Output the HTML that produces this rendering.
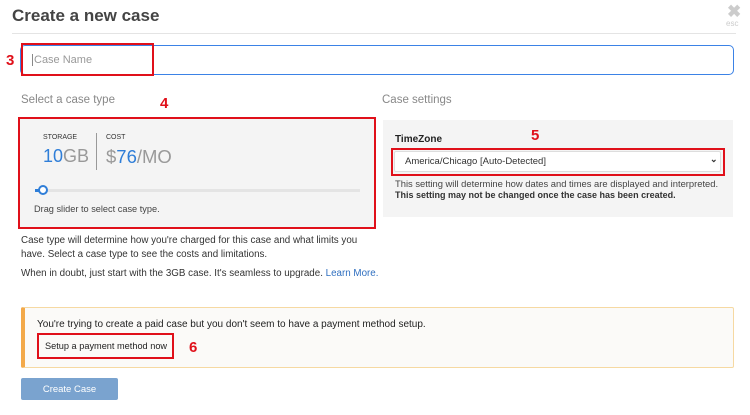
<!DOCTYPE html>
<html><head><style>
*{margin:0;padding:0;box-sizing:border-box}
body{width:750px;height:415px;background:#fff;font-family:"Liberation Sans",sans-serif;position:relative;overflow:hidden;color:#333}
.a{position:absolute;white-space:nowrap}
.red{position:absolute;border:2px solid #e0101a}
.num{position:absolute;color:#e0101a;font-weight:bold;font-size:15px}
</style></head><body>
<div class="a" style="left:12px;top:6px;font-size:17px;font-weight:bold;color:#444">Create a new case</div>
<div class="a" style="left:727px;top:2px;font-size:17px;font-weight:bold;color:#ccc">✖</div>
<div class="a" style="left:726px;top:19px;font-size:8px;color:#ccc">esc</div>
<div class="a" style="left:12px;top:33px;width:724px;height:1px;background:#e4e4e4"></div>

<div class="a" style="left:20px;top:45px;width:714px;height:30px;border:1.5px solid #3b82e6;border-radius:5px"></div>
<div class="red" style="left:21px;top:43px;width:133px;height:33px"></div>
<div class="a" style="left:32px;top:54px;font-size:11px;color:#999;border-left:1px solid #888;padding-left:1px">Case Name</div>
<div class="num" style="left:6px;top:52px">3</div>

<div class="a" style="left:21px;top:94px;font-size:11.5px;color:#888">Select a case type</div>
<div class="num" style="left:160px;top:95px">4</div>
<div class="a" style="left:19px;top:118px;width:356px;height:111px;background:#f4f4f4"></div>
<div class="red" style="left:18px;top:117px;width:358px;height:112px"></div>
<div class="a" style="left:43px;top:134px;font-size:7px;color:#333">STORAGE</div>
<div class="a" style="left:43px;top:146px;font-size:18px;color:#999"><span style="color:#2f7ed8">10</span>GB</div>
<div class="a" style="left:96px;top:133px;width:1px;height:37px;background:#999"></div>
<div class="a" style="left:106px;top:134px;font-size:7px;color:#333">COST</div>
<div class="a" style="left:106px;top:146px;font-size:18.5px;color:#999">$<span style="color:#2f7ed8">76</span>/MO</div>
<div class="a" style="left:35px;top:189px;width:325px;height:3px;background:#e4e4e4"></div>
<div class="a" style="left:35px;top:189px;width:8px;height:3px;background:#2f7ed8"></div>
<div class="a" style="left:38px;top:185px;width:10px;height:10px;border:2px solid #2f7ed8;border-radius:50%;background:#fff"></div>
<div class="a" style="left:34px;top:204px;font-size:9.2px;color:#444">Drag slider to select case type.</div>

<div class="a" style="left:382px;top:94px;font-size:11.5px;color:#888">Case settings</div>
<div class="a" style="left:383px;top:120px;width:350px;height:97px;background:#f4f4f4"></div>
<div class="a" style="left:395px;top:134px;font-size:10px;font-weight:bold;color:#222">TimeZone</div>
<div class="num" style="left:531px;top:127px">5</div>
<div class="a" style="left:394px;top:151px;width:327px;height:21px;background:#fff;border:1px solid #ddd;border-radius:2px"></div>
<div class="red" style="left:391px;top:148px;width:334px;height:28px"></div>
<div class="a" style="left:405px;top:156px;font-size:9.5px;color:#333">America/Chicago [Auto-Detected]</div>
<div class="a" style="left:710px;top:154px;font-size:9px;color:#333;font-weight:bold">⌄</div>
<div class="a" style="left:395px;top:178px;font-size:9.4px;color:#444">This setting will determine how dates and times are displayed and interpreted.</div>
<div class="a" style="left:395px;top:190px;font-size:9px;color:#333;font-weight:bold">This setting may not be changed once the case has been created.</div>

<div class="a" style="left:21px;top:235px;font-size:9.8px;color:#333">Case type will determine how you're charged for this case and what limits you</div>
<div class="a" style="left:21px;top:249px;font-size:9.8px;color:#333">have. Select a case type to see the costs and limitations.</div>
<div class="a" style="left:21px;top:268px;font-size:9.8px;color:#333">When in doubt, just start with the 3GB case. It's seamless to upgrade. <span style="color:#2f6fc0">Learn More.</span></div>

<div class="a" style="left:21px;top:307px;width:713px;height:61px;background:#fbfaf8;border:1px solid #f6d9a2;border-left:4px solid #f3a94a;border-radius:2px"></div>
<div class="a" style="left:37px;top:319px;font-size:10px;color:#222">You're trying to create a paid case but you don't seem to have a payment method setup.</div>
<div class="red" style="left:37px;top:333px;width:137px;height:26px"></div>
<div class="a" style="left:45px;top:341px;font-size:9.2px;color:#222">Setup a payment method now</div>
<div class="num" style="left:189px;top:339px">6</div>

<div class="a" style="left:21px;top:378px;width:97px;height:22px;background:#7aa3cf;border-radius:2px;color:#fff;font-size:9.5px;text-align:center;line-height:23px">Create Case</div>
</body></html>
